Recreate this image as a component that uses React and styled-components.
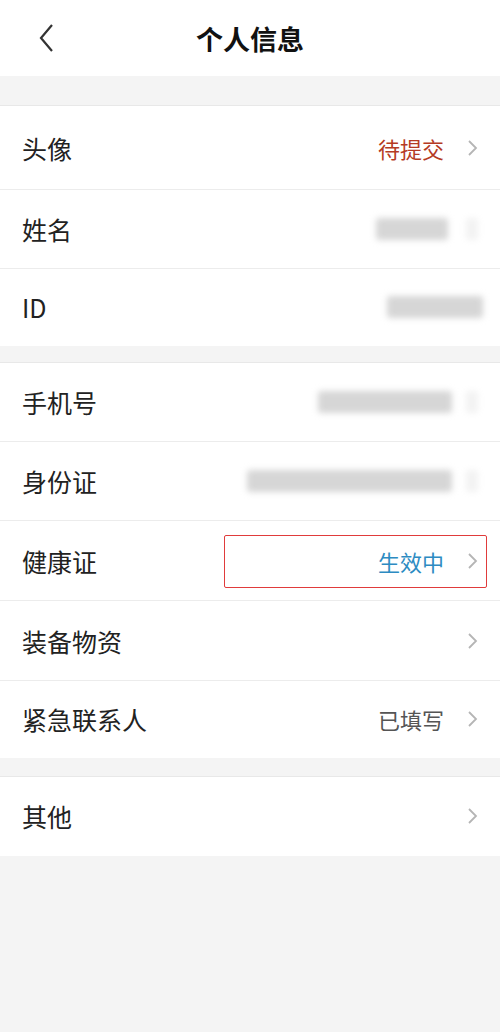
import React from "react";
import styled, { createGlobalStyle } from "styled-components";

const GlobalStyle = createGlobalStyle`
  *, *::before, *::after { box-sizing: border-box; }
  html, body {
    margin: 0;
    padding: 0;
    background: #f4f4f4;
    font-family: "Noto Sans CJK SC", "Noto Sans", sans-serif;
  }
`;

const Page = styled.div`
  min-height: 1032px;
  background: #f4f4f4;
`;

const Header = styled.header`
  height: 76px;
  background: #fff;
  display: flex;
  align-items: center;
  justify-content: center;
  position: relative;
`;

const Back = styled.button`
  position: absolute;
  left: 30px;
  top: 21px;
  width: 32px;
  height: 34px;
  border: 0;
  padding: 0;
  background: none;
  display: flex;
  align-items: center;
  justify-content: center;
`;

const Title = styled.h1`
  margin: 0;
  font-size: 27px;
  font-weight: 700;
  color: #111;
`;

const Group = styled.section`
  background: #fff;
  margin-top: ${(p) => p.$gap}px;
  border-top: 1px solid #e8e8e8;
`;

const Row = styled.div`
  height: ${(p) => p.$h || 79}px;
  display: flex;
  align-items: center;
  padding: 0 22px;
  border-bottom: 1px solid ${(p) => (p.$last ? "transparent" : "#ececec")};
  position: relative;
`;

const Label = styled.span`
  font-size: 25px;
  color: #222;
  flex: 1;
`;

const Value = styled.span`
  font-size: 22px;
  color: ${(p) => p.$color || "#555"};
  margin-right: 22px;
`;

const Blur = styled.span`
  display: inline-block;
  width: ${(p) => p.$w}px;
  height: 22px;
  background: #d6d6d6;
  filter: blur(3px);
  border-radius: 3px;
  margin-right: ${(p) => p.$mr}px;
`;

const Chev = styled.span`
  width: 12px;
  display: flex;
  justify-content: center;
  opacity: ${(p) => (p.$faint ? 0.3 : 1)};
`;

const Highlight = styled.div`
  position: absolute;
  left: 224px;
  right: 13px;
  top: 14px;
  bottom: 12px;
  border: 1.5px solid #e03b3b;
  border-radius: 2px;
`;

const Chevron = () => (
  <svg width="11" height="18" viewBox="0 0 11 18">
    <path d="M2 2l7 7-7 7" fill="none" stroke="#b5b5b5" strokeWidth="1.8" />
  </svg>
);

export default function App() {
  return (
    <Page>
      <GlobalStyle />
      <Header>
        <Back aria-label="back">
          <svg width="16" height="30" viewBox="0 0 16 30">
            <path d="M14 2L3 15l11 13" fill="none" stroke="#333" strokeWidth="2.2" />
          </svg>
        </Back>
        <Title>个人信息</Title>
      </Header>

      <Group $gap={29}>
        <Row $h={84}>
          <Label>头像</Label>
          <Value $color="#b53a23">待提交</Value>
          <Chev><Chevron /></Chev>
        </Row>
        <Row>
          <Label>姓名</Label>
          <Blur $w={72} $mr={18} />
          <Chev $faint><Blur $w={20} $mr={0} /></Chev>
        </Row>
        <Row $h={77} $last>
          <Label>ID</Label>
          <Blur $w={96} $mr={-5} />
        </Row>
      </Group>

      <Group $gap={16}>
        <Row>
          <Label>手机号</Label>
          <Blur $w={134} $mr={14} />
          <Chev $faint><Blur $w={18} $mr={0} /></Chev>
        </Row>
        <Row>
          <Label>身份证</Label>
          <Blur $w={205} $mr={14} />
          <Chev $faint><Blur $w={18} $mr={0} /></Chev>
        </Row>
        <Row $h={80}>
          <Label>健康证</Label>
          <Value $color="#2d8bc2">生效中</Value>
          <Chev><Chevron /></Chev>
          <Highlight />
        </Row>
        <Row $h={80}>
          <Label>装备物资</Label>
          <Chev><Chevron /></Chev>
        </Row>
        <Row $h={77} $last>
          <Label>紧急联系人</Label>
          <Value>已填写</Value>
          <Chev><Chevron /></Chev>
        </Row>
      </Group>

      <Group $gap={18}>
        <Row $h={79} $last>
          <Label>其他</Label>
          <Chev><Chevron /></Chev>
        </Row>
      </Group>
    </Page>
  );
}
